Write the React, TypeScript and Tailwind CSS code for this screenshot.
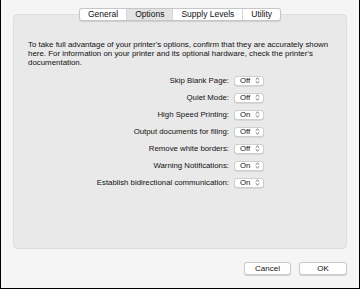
import React from "react";

const rows = [
  { label: "Skip Blank Page:", value: "Off" },
  { label: "Quiet Mode:", value: "Off" },
  { label: "High Speed Printing:", value: "On" },
  { label: "Output documents for filing:", value: "Off" },
  { label: "Remove white borders:", value: "Off" },
  { label: "Warning Notifications:", value: "On" },
  { label: "Establish bidirectional communication:", value: "On" },
];

const tabs = ["General", "Options", "Supply Levels", "Utility"];

const Chevrons = () => (
  <svg width="5" height="7" viewBox="0 0 5 7" className="shrink-0">
    <path d="M0.8 2.6 L2.5 1 L4.2 2.6" fill="none" stroke="#444" strokeWidth="0.8" />
    <path d="M0.8 4.4 L2.5 6 L4.2 4.4" fill="none" stroke="#444" strokeWidth="0.8" />
  </svg>
);

const PopUp = ({ value }: { value: string }) => (
  <div className="w-[30px] h-[10px] ml-[5px] flex items-center justify-between pl-[5px] pr-[3px] bg-white border border-[#cfcfcf] rounded-[3px] shadow-[0_0.5px_0.5px_rgba(0,0,0,0.15)] text-[7.8px] leading-none">
    <span>{value}</span>
    <Chevrons />
  </div>
);

export default function App() {
  return (
    <div className="w-[360px] h-[289px] bg-[#f5f5f5] border-l border-r border-b border-black font-['Liberation_Sans',Arial,sans-serif] text-[#111] flex flex-col">
      <div className="pt-[14px] pl-[12px] pr-[12px]">
        <div className="h-[235px] bg-[#e9e9e9] border border-[#dedede] rounded-[4px] flex flex-col">
          <div className="flex justify-center -mt-[7px]">
            <div className="flex h-[13px] bg-white border border-[#c6c6c6] rounded-[3px] shadow-[0_0.5px_1px_rgba(0,0,0,0.12)] text-[8.5px] leading-none overflow-hidden">
              {tabs.map((t, i) => (
                <div
                  key={t}
                  className={`flex items-center justify-center px-[8px] ${
                    i === 1 ? "bg-[#e3e3e3]" : ""
                  } ${i > 0 ? "border-l border-[#d6d6d6]" : ""}`}
                >
                  {t}
                </div>
              ))}
            </div>
          </div>
          <p className="mt-[19px] px-[14px] text-[7.9px] leading-[9px]">
            To take full advantage of your printer&apos;s options, confirm that they are accurately shown
            here. For information on your printer and its optional hardware, check the printer&apos;s
            documentation.
          </p>
          <div className="mt-[5px] flex flex-col pl-[14px]">
            {rows.map((r) => (
              <div key={r.label} className="h-[17px] flex items-center">
                <div className="w-[201px] text-right text-[7.8px] leading-none">{r.label}</div>
                <PopUp value={r.value} />
              </div>
            ))}
          </div>
        </div>
      </div>
      <div className="flex justify-end gap-[8px] pr-[12px] mt-[13px]">
        <button className="w-[47px] h-[13px] bg-white border border-[#cbcbcb] rounded-[3px] shadow-[0_0.5px_1px_rgba(0,0,0,0.15)] text-[8px] leading-none">
          Cancel
        </button>
        <button className="w-[48px] h-[13px] bg-white border border-[#cbcbcb] rounded-[3px] shadow-[0_0.5px_1px_rgba(0,0,0,0.15)] text-[8px] leading-none">
          OK
        </button>
      </div>
    </div>
  );
}
